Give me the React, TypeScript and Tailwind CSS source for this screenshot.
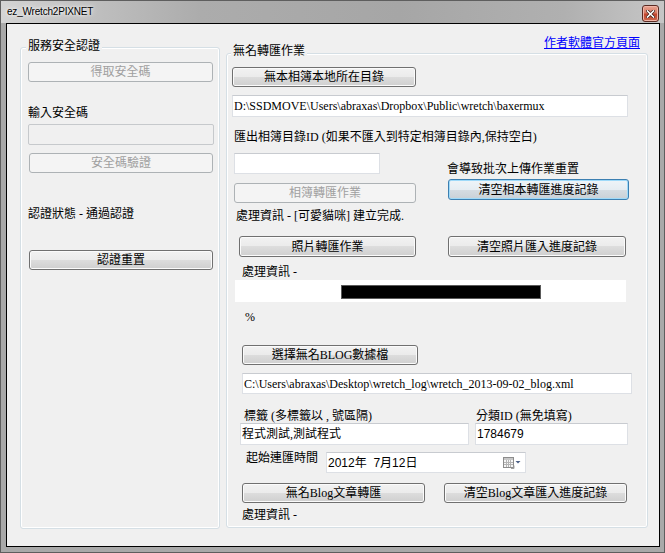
import React from 'react';

const FB = "font-['Liberation_Serif','Noto_Sans_CJK_TC',serif] text-[12px] whitespace-nowrap";
const F = FB + " leading-[14px]";
const SANS = "font-['Liberation_Sans','Noto_Sans_CJK_TC',sans-serif] text-[12px] leading-[14px] whitespace-pre";

const BTN_N = "border-[#707070] bg-[linear-gradient(to_bottom,#f2f2f2_0%,#ebebeb_50%,#dddddd_50%,#cfcfcf_100%)] shadow-[inset_0_0_0_1px_#fbfbfb] text-black";
const BTN_D = "border-[#adb2b5] bg-[#f4f4f4] text-[#a0a0a0]";
const BTN_F = "border-[#3c7fb1] bg-[linear-gradient(to_bottom,#eef4f8_0%,#e6edf2_50%,#d6dde3_50%,#c9d0d6_100%)] shadow-[inset_0_0_0_1px_#9fdaf9] text-black";

function Btn({ className = '', variant = 'n', children }: { className?: string; variant?: 'n' | 'd' | 'f'; children: React.ReactNode }) {
  const v = variant === 'd' ? BTN_D : variant === 'f' ? BTN_F : BTN_N;
  return (
    <div className={`${F} shrink-0 flex items-center justify-center rounded-[3px] border ${v} ${className}`}>
      {children}
    </div>
  );
}

function TB({ className = '', font = F, children }: { className?: string; font?: string; children?: React.ReactNode }) {
  return (
    <div className={`${font} shrink-0 flex items-center overflow-hidden bg-white border border-[#dde0e5] border-t-[#c8cbd0] pl-[1px] ${className}`}>
      {children}
    </div>
  );
}

function Lbl({ className = '', children }: { className?: string; children: React.ReactNode }) {
  return <div className={`${F} ${className}`}>{children}</div>;
}

function CloseBtn() {
  return (
    <div className="self-start mt-[4px] w-[17px] h-[17px] rounded-[3px] border border-[#5a2a22] bg-[linear-gradient(to_bottom,#e9a593_0%,#d77a64_45%,#c0432c_55%,#cf6a4e_100%)] shadow-[inset_0_0_0_1px_#f0b4a6] flex items-center justify-center">
      <svg width="9" height="8" viewBox="0 0 9 8">
        <path d="M1.5 1 L7.5 7 M7.5 1 L1.5 7" stroke="#3a1a14" strokeWidth="3" strokeLinecap="square" />
        <path d="M1.5 1 L7.5 7 M7.5 1 L1.5 7" stroke="#ffffff" strokeWidth="1.6" strokeLinecap="square" />
      </svg>
    </div>
  );
}

function CalIcon() {
  return (
    <svg width="18" height="12" viewBox="0 0 18 12">
      <rect x="0.5" y="0.5" width="10" height="10" fill="#f6f6f6" stroke="#8c8c8c" />
      <rect x="1" y="1" width="9" height="2" fill="#c8c8c8" />
      <path d="M1 5.5 H10 M1 7.5 H10 M3.5 3 V10 M5.5 3 V10 M7.5 3 V10" stroke="#b4b4b4" strokeWidth="1" />
      <path d="M8 11.5 L11 11.5 L11 8.5" stroke="#a0a0a0" fill="none" />
      <path d="M12.5 4 L17.5 4 L15 6.5 Z" fill="#4b5f86" />
    </svg>
  );
}

export default function App() {
  return (
    <div className="w-[665px] h-[553px] flex flex-col border border-[#5e5e5e] bg-[#a9a9a9] text-black">
      <div className="h-[22px] shrink-0 flex items-center justify-between pl-[6px] pr-[5px] bg-[linear-gradient(to_right,#d4d4d4_0%,#c4c4c4_10%,#acacac_30%,#a6a6a6_60%,#b0b0b0_85%,#c6c6c6_100%)]">
        <span className="font-['Liberation_Sans',sans-serif] text-[10px] leading-[14px] tracking-[-0.2px] [text-shadow:0_0_6px_#ffffff,0_0_3px_#ffffff]">
          ez_Wretch2PIXNET
        </span>
        <CloseBtn />
      </div>

      <div className="ml-[5px] mr-[4px] mb-[5px] h-[524px] border border-black bg-[#f0f0f0] flex items-start">
        {/* Left group */}
        <div className="relative ml-[13px] mt-[23px] w-[200px] h-[482px] shrink-0 rounded-[3px] border border-[#d5dfe5] shadow-[inset_0_0_0_1px_#ffffff] flex flex-col items-start">
          <span className={`${F} absolute left-[5px] top-[-9px] bg-[#f0f0f0] px-[2px]`}>服務安全認證</span>
          <Btn variant="d" className="mt-[14px] ml-[7px] w-[185px] h-[20px]">得取安全碼</Btn>
          <Lbl className="mt-[24px] ml-[7px]">輸入安全碼</Lbl>
          <div className="mt-[4px] ml-[7px] w-[186px] h-[21px] rounded-[2px] border border-[#c6c9cc] bg-[#f0f0f0]" />
          <Btn variant="d" className="mt-[8px] ml-[8px] w-[184px] h-[20px]">安全碼驗證</Btn>
          <Lbl className="mt-[34px] ml-[7px]">認證狀態 - 通過認證</Lbl>
          <Btn className="mt-[29px] ml-[8px] w-[184px] h-[20px]">認證重置</Btn>
        </div>

        {/* Right column */}
        <div className="ml-[6px] w-[422px] shrink-0 flex flex-col">
          <div className="mt-[12px] flex justify-end pr-[8px]">
            <span className={`${F} text-[#0000ff] underline`}>作者軟體官方頁面</span>
          </div>
          <div className="relative mt-[3px] w-[422px] h-[475px] rounded-[3px] border border-[#d5dfe5] shadow-[inset_0_0_0_1px_#ffffff] flex flex-col items-start">
            <span className={`${F} absolute left-[4px] top-[-10px] bg-[#f0f0f0] px-[2px]`}>無名轉匯作業</span>

            <Btn className="mt-[13px] ml-[5px] w-[184px] h-[20px]">無本相簿本地所在目錄</Btn>
            <TB className="mt-[8px] ml-[5px] w-[396px] h-[22px]">D:\SSDMOVE\Users\abraxas\Dropbox\Public\wretch\baxermux</TB>
            <Lbl className="mt-[13px] ml-[7px]">匯出相簿目錄ID (如果不匯入到特定相簿目錄內,保持空白)</Lbl>

            <div className="ml-[7px] flex items-start">
              <div className="w-[182px] flex flex-col items-start">
                <TB className="mt-[9px] w-[146px] h-[21px]" />
                <Btn variant="d" className="mt-[9px] w-[182px] h-[20px]">相簿轉匯作業</Btn>
                <Lbl className="mt-[6px] ml-[2px]">處理資訊 - [可愛貓咪] 建立完成.</Lbl>
              </div>
              <div className="ml-[31px] flex flex-col items-start">
                <Lbl className="mt-[18px]">會導致批次上傳作業重置</Lbl>
                <Btn variant="f" className="mt-[3px] ml-[1px] w-[181px] h-[21px]">清空相本轉匯進度記錄</Btn>
              </div>
            </div>

            <div className="mt-[13px] ml-[12px] flex">
              <Btn className="w-[177px] h-[21px]">照片轉匯作業</Btn>
              <Btn className="ml-[32px] w-[178px] h-[21px]">清空照片匯入進度記錄</Btn>
            </div>

            <Lbl className="mt-[8px] ml-[15px]">處理資訊 -</Lbl>
            <div className="mt-[1px] ml-[8px] w-[391px] h-[22px] bg-white pl-[106px] pt-[5px]">
              <div className="w-[200px] h-[14px] bg-black border border-[#5a5a5a]" />
            </div>
            <Lbl className="mt-[8px] ml-[18px]">%</Lbl>

            <Btn className="mt-[21px] ml-[15px] w-[176px] h-[20px]">選擇無名BLOG數據檔</Btn>
            <TB className="mt-[8px] ml-[15px] w-[390px] h-[21px]">C:\Users\abraxas\Desktop\wretch_log\wretch_2013-09-02_blog.xml</TB>

            <div className="mt-[16px] ml-[13px] flex">
              <div className="w-[229px] flex flex-col items-start">
                <div className={`${FB} leading-[13px] ml-[4px]`}>標籤 (多標籤以 , 號區隔)</div>
                <TB className="w-[229px] h-[22px]">程式測試,測試程式</TB>
              </div>
              <div className="ml-[6px] flex flex-col items-start">
                <div className={`${FB} leading-[13px] ml-[1px]`}>分類ID (無免填寫)</div>
                <TB font={SANS} className="w-[153px] h-[22px]">1784679</TB>
              </div>
            </div>

            <div className="mt-[6px] ml-[19px] flex items-start">
              <Lbl>起始連匯時間</Lbl>
              <div className="ml-[8px] mt-[1px] w-[200px] h-[21px] bg-white border border-[#dde0e5] border-t-[#c8cbd0] flex items-center justify-between pl-[1px] pr-[4px]">
                <span className={SANS}>2012年  7月12日</span>
                <CalIcon />
              </div>
            </div>

            <div className="mt-[10px] ml-[15px] flex">
              <Btn className="w-[183px] h-[20px]">無名Blog文章轉匯</Btn>
              <Btn className="ml-[19px] w-[183px] h-[20px]">清空Blog文章匯入進度記錄</Btn>
            </div>
            <Lbl className="mt-[5px] ml-[15px]">處理資訊 -</Lbl>
          </div>
        </div>
      </div>
    </div>
  );
}
